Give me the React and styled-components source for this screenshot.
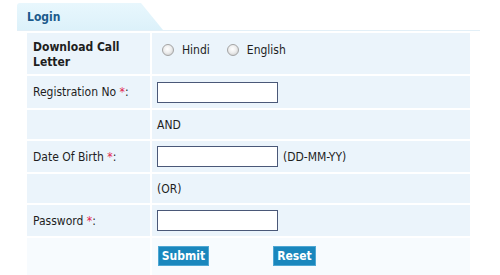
import React from "react";
import styled, { createGlobalStyle } from "styled-components";

const Global = createGlobalStyle`
  html, body { margin: 0; padding: 0; background: #ffffff; }
  body { font-family: "DejaVu Sans Condensed", "DejaVu Sans", sans-serif; font-size: 12px; color: #1e1e1e; }
`;

const Page = styled.div`
  width: 500px;
  height: 275px;
  padding: 3px 0 0 17px;
  box-sizing: border-box;
  overflow: hidden;
`;

const Header = styled.div`
  width: 463px;
  height: 28px;
  border-bottom: 1px solid #e2eff7;
  box-sizing: border-box;
`;

const Tab = styled.div`
  width: 146px;
  height: 27px;
  background: linear-gradient(#e8f7fd, #dcf1fa);
  clip-path: polygon(0 0, 124px 0, 146px 100%, 0 100%);
  border-top-left-radius: 3px;
  display: flex;
  align-items: center;
  padding-left: 10px;
  box-sizing: border-box;
  font-weight: bold;
  color: #1b5a8c;
  font-size: 12px;
`;

const Table = styled.div`
  margin: 2px 0 0 10px;
  width: 443px;
  display: flex;
  flex-direction: column;
  gap: 2px;
`;

const Row = styled.div`
  display: grid;
  grid-template-columns: 123px 1fr;
  gap: 2px;
  height: ${(p) => p.$h}px;
`;

const Cell = styled.div`
  background: ${(p) => (p.$pale ? "#f7fbfe" : "#ebf4fb")};
  display: flex;
  align-items: ${(p) => (p.$top ? "flex-start" : "center")};
  padding: ${(p) => p.$pt || 0}px 0 0 ${(p) => (p.$value ? 5 : 6)}px;
  box-sizing: border-box;
`;

const BoldLabel = styled.div`
  font-weight: bold;
  line-height: 15px;
  margin-top: 3px;
`;

const Label = styled.span``;

const Star = styled.span`
  color: #e2234d;
`;

const Hint = styled.span`
  margin-left: 5px;
`;

const Input = styled.input`
  width: 121px;
  height: 21px;
  box-sizing: border-box;
  border: 1px solid #4a5878;
  background: #fff;
  margin: 0;
  padding: 0 2px;
`;

const RadioGroup = styled.label`
  display: flex;
  align-items: center;
  gap: 8px;
  margin-left: ${(p) => (p.$first ? 5 : 17)}px;
`;

const Radio = styled.span`
  width: 10px;
  height: 10px;
  border-radius: 50%;
  border: 1px solid #a4a4a4;
  background: radial-gradient(circle at 45% 40%, #ffffff 0, #eeeeee 45%, #c4c4c4 100%);
  display: inline-block;
`;

const Buttons = styled.div`
  display: flex;
  gap: 64px;
  padding-left: 1px;
`;

const Button = styled.button`
  height: 20px;
  padding: 0;
  background: #1a87bd;
  color: #fff;
  font-family: "DejaVu Sans Condensed", "DejaVu Sans", sans-serif;
  font-weight: bold;
  font-size: 12px;
  border: 1px solid #4fa7d3;
  cursor: pointer;
  width: ${(p) => p.$w}px;
`;

export default function App() {
  return (
    <>
      <Global />
      <Page>
        <Header>
          <Tab>Login</Tab>
        </Header>
        <Table>
          <Row $h={41}>
            <Cell>
              <BoldLabel>
                Download Call
                <br />
                Letter
              </BoldLabel>
            </Cell>
            <Cell $value $top $pt={10}>
              <RadioGroup $first>
                <Radio /> Hindi
              </RadioGroup>
              <RadioGroup>
                <Radio /> English
              </RadioGroup>
            </Cell>
          </Row>
          <Row $h={32}>
            <Cell>
              <Label>
                Registration No <Star>*</Star>:
              </Label>
            </Cell>
            <Cell $value>
              <Input type="text" />
            </Cell>
          </Row>
          <Row $h={29}>
            <Cell />
            <Cell $value>AND</Cell>
          </Row>
          <Row $h={31}>
            <Cell>
              <Label>
                Date Of Birth <Star>*</Star>:
              </Label>
            </Cell>
            <Cell $value>
              <Input type="text" />
              <Hint>(DD-MM-YY)</Hint>
            </Cell>
          </Row>
          <Row $h={29}>
            <Cell />
            <Cell $value>(OR)</Cell>
          </Row>
          <Row $h={31}>
            <Cell>
              <Label>
                Password <Star>*</Star>:
              </Label>
            </Cell>
            <Cell $value>
              <Input type="password" />
            </Cell>
          </Row>
          <Row $h={40}>
            <Cell $pale />
            <Cell $pale $value $top $pt={8}>
              <Buttons>
                <Button $w={51}>Submit</Button>
                <Button $w={43}>Reset</Button>
              </Buttons>
            </Cell>
          </Row>
        </Table>
      </Page>
    </>
  );
}
